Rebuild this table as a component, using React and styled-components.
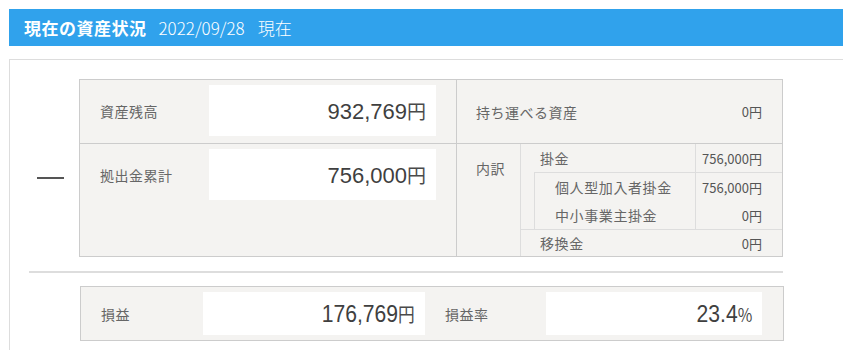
import styled, { createGlobalStyle } from 'styled-components';

const GlobalStyle = createGlobalStyle`
	body {
		margin: 0;
		background: #fff;
		overflow: hidden;
		font-family: "Noto Sans CJK JP", "Noto Sans", sans-serif;
		color: #666;
	}
`;

const Page = styled.div`
	width: 860px;
	padding: 9px 0 0 9px;
`;

const HeaderBar = styled.header`
	display: flex;
	align-items: center;
	height: 37px;
	padding-left: 15px;
	background-color: #30a2ec;
	color: #fff;
`;

const Title = styled.h2`
	margin: 0;
	font-size: 17px;
	font-weight: bold;
	letter-spacing: 0.5px;
`;

const AsOf = styled.span`
	margin-left: 12px;
	font-size: 17px;
	font-weight: 300;
`;

const AsOfWord = styled.span`
	margin-left: 13px;
`;

const Panel = styled.section`
	margin-top: 13px;
	padding: 19px 0 10px;
	border-top: 1px solid #ddd;
	border-left: 1px solid #ddd;
`;

const Summary = styled.div`
	display: flex;
`;

const ToggleCol = styled.div`
	display: flex;
	justify-content: center;
	align-items: center;
	width: 69px;
	padding: 20px 0 0 12px;
	box-sizing: border-box;
`;

const Minus = styled.span`
	display: block;
	width: 27px;
	height: 2px;
	background: #555;
`;

const Table = styled.div`
	display: grid;
	grid-template-columns: 376px 326px;
	grid-template-rows: 64px 112px;
	border: 1px solid #ccc;
	background: #f4f3f1;
`;

const Cell = styled.div`
	display: flex;
	align-items: ${(props) => (props.top ? 'flex-start' : 'center')};
	padding-top: ${(props) => (props.boxed ? '5px' : '0')};
	border-bottom: ${(props) => (props.last ? 'none' : '1px solid #ccc')};
	border-left: ${(props) => (props.right ? '1px solid #ccc' : 'none')};
`;

const Label = styled.div`
	display: flex;
	align-items: center;
	width: ${(props) => props.w || 129}px;
	height: ${(props) => props.h || 51}px;
	padding-left: 20px;
	box-sizing: border-box;
	font-size: 14px;
	letter-spacing: 0.5px;
	color: #666;
`;

const ValueBox = styled.div`
	display: flex;
	justify-content: flex-end;
	align-items: center;
	width: ${(props) => props.w}px;
	height: ${(props) => props.h || 51}px;
	padding-right: 10px;
	box-sizing: border-box;
	background: #fff;
`;

const Amount = styled.span`
	display: inline-flex;
	align-items: baseline;
	color: #3f3f3f;
	transform: ${(props) => (props.narrow ? 'scaleX(0.88)' : 'none')};
	transform-origin: right center;
`;

const Digits = styled.span`
	font-family: "Liberation Sans", Arial, sans-serif;
	font-size: ${(props) => props.size}px;
`;

const Unit = styled.span`
	font-size: ${(props) => props.size}px;
	color: #4a4a4a;
`;

const PortableRow = styled.div`
	display: flex;
	justify-content: space-between;
	align-items: center;
	width: 100%;
	padding: 0 20px 0 19px;
	font-size: 14px;
	letter-spacing: 0.5px;
`;

const SmallValue = styled.span`
	font-size: 13px;
	letter-spacing: 0;
	color: #555;
`;

const Breakdown = styled.div`
	display: flex;
	width: 100%;
	height: 100%;
`;

const Kind = styled.div`
	width: 64px;
	padding: 14px 0 0 19px;
	box-sizing: border-box;
	border-right: 1px solid #ddd;
	font-size: 14px;
	letter-spacing: 0.5px;
`;

const Items = styled.div`
	display: flex;
	flex-direction: column;
	flex: 1;
`;

const SubGroup = styled.div`
	margin-left: 13px;
	border-top: 1px solid #ddd;
	border-left: 1px solid #ddd;
`;

const ItemRow = styled.div`
	display: flex;
	height: ${(props) => (props.grow ? 'auto' : '28px')};
	flex: ${(props) => (props.grow ? 1 : 'none')};
	border-top: ${(props) => (props.divided ? '1px solid #ddd' : 'none')};
`;

const ItemName = styled.div`
	display: flex;
	align-items: center;
	flex: 1;
	padding-left: ${(props) => (props.sub ? 20 : 19)}px;
	font-size: 14px;
	letter-spacing: 0.6px;
	color: #666;
`;

const ItemValue = styled.div`
	display: flex;
	justify-content: flex-end;
	align-items: center;
	width: 87px;
	padding-right: 20px;
	box-sizing: border-box;
	border-left: ${(props) => (props.plain ? '1px solid transparent' : '1px solid #ddd')};
	font-size: 13px;
	color: #555;
`;

const Separator = styled.hr`
	width: 754px;
	height: 2px;
	margin: 14px 0 13px 19px;
	border: none;
	background: #ddd;
`;

const ProfitBox = styled.div`
	display: flex;
	align-items: center;
	width: 704px;
	height: 55px;
	margin-left: 70px;
	box-sizing: border-box;
	border: 1px solid #ccc;
	background: #f4f3f1;
`;

const money = (value, size, unitSize, narrow) => (
	<Amount narrow={narrow}>
		<Digits size={size}>{value}</Digits>
		<Unit size={unitSize}>円</Unit>
	</Amount>
);

const breakdown = [
	{ name: '個人型加入者掛金', value: '756,000円' },
	{ name: '中小事業主掛金', value: '0円' },
];

const App = () => {
	return (
		<Page>
			<GlobalStyle />
			<HeaderBar>
				<Title>現在の資産状況</Title>
				<AsOf>
					2022/09/28<AsOfWord>現在</AsOfWord>
				</AsOf>
			</HeaderBar>

			<Panel>
				<Summary>
					<ToggleCol>
						<Minus />
					</ToggleCol>

					<Table>
						<Cell boxed top>
							<Label>資産残高</Label>
							<ValueBox w={227}>{money('932,769', 22, 19)}</ValueBox>
						</Cell>
						<Cell right>
							<PortableRow>
								<span>持ち運べる資産</span>
								<SmallValue>0円</SmallValue>
							</PortableRow>
						</Cell>
						<Cell boxed top last>
							<Label>拠出金累計</Label>
							<ValueBox w={227}>{money('756,000', 22, 19)}</ValueBox>
						</Cell>
						<Cell right last top>
							<Breakdown>
								<Kind>内訳</Kind>
								<Items>
									<ItemRow>
										<ItemName>掛金</ItemName>
										<ItemValue>756,000円</ItemValue>
									</ItemRow>
									<SubGroup>
										{breakdown.map((item) => (
											<ItemRow key={item.name}>
												<ItemName sub>{item.name}</ItemName>
												<ItemValue>{item.value}</ItemValue>
											</ItemRow>
										))}
									</SubGroup>
									<ItemRow divided grow>
										<ItemName>移換金</ItemName>
										<ItemValue plain>0円</ItemValue>
									</ItemRow>
								</Items>
							</Breakdown>
						</Cell>
					</Table>
				</Summary>

				<Separator />

				<ProfitBox>
					<Label w={122} h={43}>損益</Label>
					<ValueBox w={222} h={43}>{money('176,769', 24, 19, true)}</ValueBox>
					<Label w={121} h={43}>損益率</Label>
					<ValueBox w={216} h={43}>
						<Amount narrow>
							<Digits size={24}>23.4</Digits>
							<Unit size={18}>%</Unit>
						</Amount>
					</ValueBox>
				</ProfitBox>
			</Panel>
		</Page>
	);
};

export default App;
